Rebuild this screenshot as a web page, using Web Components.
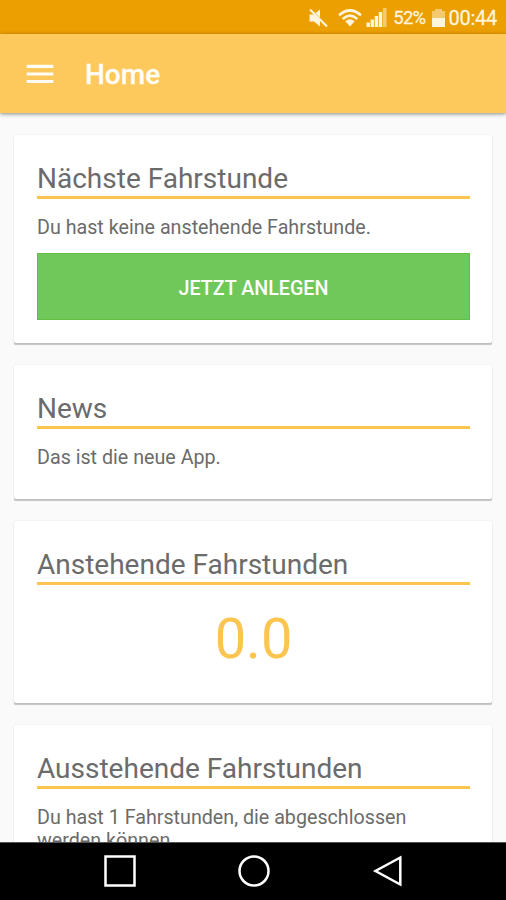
<!DOCTYPE html>
<html lang="de">
<head>
<meta charset="utf-8">
<title>Home</title>
<style>
  html, body {
    margin: 0;
    height: 100%;
    overflow: hidden;
  }
  body {
    font-family: Roboto, "Liberation Sans", sans-serif;
    --accent: #fbc54f;
    --text: #6b6b6b;
  }
</style>
</head>
<body>
<home-screen></home-screen>

<script>
class StatusBar extends HTMLElement {
  connectedCallback() {
    this.attachShadow({ mode: 'open' });
    this.shadowRoot.innerHTML = `
      <style>
        :host {
          display: flex;
          justify-content: flex-end;
          align-items: center;
          flex: none;
          box-sizing: border-box;
          height: 34px;
          padding: 2px 9px 0 0;
          background: #eb9f00;
          color: #fff4dc;
        }
        svg { display: block; flex: none; fill: #fff4dc; }
        .mute { margin-right: 9px; }
        .wifi { margin-right: 4px; }
        .signal { margin-right: 6px; }
        .percent { font-size: 18.5px; letter-spacing: -0.75px; margin-right: 7px; -webkit-text-stroke: 0.3px; }
        .battery { margin-right: 3px; }
        .clock { font-size: 20px; letter-spacing: -0.25px; -webkit-text-stroke: 0.3px; }
      </style>
      <svg class="mute" width="21" height="20" viewBox="0 0 21 20">
        <path d="M1.500 6.500v7H6l6 5v-6.500L6 6.500zM7.500 5L12 1.500v8z"/>
        <path d="M2 1.500l17 17" stroke="#fff4dc" stroke-width="2.200"/>
      </svg>
      <svg class="wifi" width="24" height="18" viewBox="0 0 24 18">
        <g fill="none" stroke="#fff4dc" stroke-width="2.700">
          <path d="M1 6.300Q12-3.300 23 6.300"/>
          <path d="M4.700 9.900Q12 3.300 19.300 9.900"/>
        </g>
        <path d="M7.300 12.300Q12 8.300 16.700 12.300L12 17.500z"/>
      </svg>
      <svg class="signal" width="21" height="20" viewBox="0 0 21 20">
        <path d="M.5 14.500h3.400V19H.5zM4.600 11.500H8V19H4.600zM8.700 8h3.400v11H8.700zM12.800 4h3.400v15h-3.400z"/>
        <path d="M16.900 0h3.600v19h-3.600z" opacity=".5"/>
      </svg>
      <span class="percent">52%</span>
      <svg class="battery" width="13" height="20" viewBox="0 0 13 20">
        <path d="M0 3h3V1h7v2h3v7H0z" opacity=".5"/>
        <path d="M0 10h13v9H0z"/>
      </svg>
      <span class="clock">00:44</span>
    `;
  }
}

class AppBar extends HTMLElement {
  connectedCallback() {
    this.attachShadow({ mode: 'open' });
    this.shadowRoot.innerHTML = `
      <style>
        :host {
          display: flex;
          align-items: center;
          flex: none;
          box-sizing: border-box;
          height: 79px;
          padding: 0 26px;
          background: #fdc95d;
          box-shadow: 0 1px 4px rgba(0, 0, 0, .45);
          color: #fffdf6;
          z-index: 1;
        }
        svg { display: block; margin-right: 31px; }
        h1 {
          margin: 2px 0 0;
          font-size: 28px;
          font-weight: 500;
          line-height: 33px;
          -webkit-text-stroke: 0.3px;
        }
      </style>
      <svg width="28" height="20" viewBox="0 0 28 20" stroke="#fffdf6" stroke-width="3.200">
        <path d="M.6 2.300h26.800M.6 10h26.800M.6 17.500h26.800"/>
      </svg>
      <h1><slot></slot></h1>
    `;
  }
}

class InfoCard extends HTMLElement {
  connectedCallback() {
    this.attachShadow({ mode: 'open' });
    this.shadowRoot.innerHTML = `
      <style>
        :host {
          display: block;
          flex: none;
          padding: 23px 22px 23px 23px;
          background: #fff;
          border-radius: 2px;
          box-shadow: 0 2px 1px -0.500px rgba(0, 0, 0, .22), 0 0 1.500px rgba(0, 0, 0, .13);
          color: var(--text);
        }
        h2 {
          margin: 0;
          padding: 4px 0 1px;
          border-bottom: 3px solid var(--accent);
          font-size: 28px;
          font-weight: 400;
          line-height: 33px;
        }
      </style>
      <h2>${this.getAttribute('heading')}</h2>
      <slot></slot>
    `;
  }
}

class CardText extends HTMLElement {
  connectedCallback() {
    this.attachShadow({ mode: 'open' });
    this.shadowRoot.innerHTML = `
      <style>
        :host {
          display: block;
          padding: 17px 0 7px;
          font-size: 19.700px;
          line-height: 23px;
        }
      </style>
      <slot></slot>
    `;
  }
}

class ActionButton extends HTMLElement {
  connectedCallback() {
    this.attachShadow({ mode: 'open' });
    this.shadowRoot.innerHTML = `
      <style>
        :host { display: block; margin-top: 7px; }
        button {
          display: block;
          width: 100%;
          height: 67px;
          padding: 4px 0 0;
          border: 1px solid #62bf45;
          background: #70c75a;
          color: #fff;
          font: 500 19.700px Roboto, sans-serif;
          text-transform: uppercase;
        }
      </style>
      <button type="button"><slot></slot></button>
    `;
  }
}

class BigNumber extends HTMLElement {
  connectedCallback() {
    this.attachShadow({ mode: 'open' });
    this.shadowRoot.innerHTML = `
      <style>
        :host {
          display: block;
          padding: 21px 0 8px;
          color: var(--accent);
          font-size: 56px;
          line-height: 66px;
          text-align: center;
        }
      </style>
      <slot></slot>
    `;
  }
}

class NavBar extends HTMLElement {
  connectedCallback() {
    this.attachShadow({ mode: 'open' });
    this.shadowRoot.innerHTML = `
      <style>
        :host {
          display: flex;
          justify-content: center;
          align-items: center;
          gap: 102px;
          flex: none;
          box-sizing: border-box;
          height: 58px;
          padding: 0 0 2px 2px;
          border-top: 1px solid #555;
          background: #000;
          z-index: 1;
        }
        svg { display: block; fill: none; stroke: #fff; stroke-width: 2.500; }
      </style>
      <svg width="32" height="32" viewBox="0 0 32 32"><rect x="1.500" y="1.500" width="29" height="29"/></svg>
      <svg width="32" height="32" viewBox="0 0 32 32"><circle cx="16" cy="16" r="14.500"/></svg>
      <svg width="32" height="32" viewBox="0 0 32 32"><path d="M28.300 2.500v27L3.500 16z"/></svg>
    `;
  }
}

class HomeScreen extends HTMLElement {
  connectedCallback() {
    this.attachShadow({ mode: 'open' });
    this.shadowRoot.innerHTML = `
      <style>
        :host {
          display: flex;
          flex-direction: column;
          height: 100vh;
          background: #fafafa;
        }
        main {
          display: flex;
          flex-direction: column;
          flex: 1;
          gap: 22px;
          min-height: 0;
          padding: 22px 14px 0;
          overflow: hidden;
        }
      </style>
      <status-bar></status-bar>
      <app-bar>Home</app-bar>
      <main>
        <info-card heading="Nächste Fahrstunde">
          <card-text>Du hast keine anstehende Fahrstunde.</card-text>
          <action-button>Jetzt anlegen</action-button>
        </info-card>
        <info-card heading="News">
          <card-text>Das ist die neue App.</card-text>
        </info-card>
        <info-card heading="Anstehende Fahrstunden">
          <big-number>0.0</big-number>
        </info-card>
        <info-card heading="Ausstehende Fahrstunden">
          <card-text>Du hast 1 Fahrstunden, die abgeschlossen werden können.</card-text>
        </info-card>
      </main>
      <nav-bar></nav-bar>
    `;
  }
}

customElements.define('status-bar', StatusBar);
customElements.define('app-bar', AppBar);
customElements.define('info-card', InfoCard);
customElements.define('card-text', CardText);
customElements.define('action-button', ActionButton);
customElements.define('big-number', BigNumber);
customElements.define('nav-bar', NavBar);
customElements.define('home-screen', HomeScreen);
</script>
</body>
</html>
